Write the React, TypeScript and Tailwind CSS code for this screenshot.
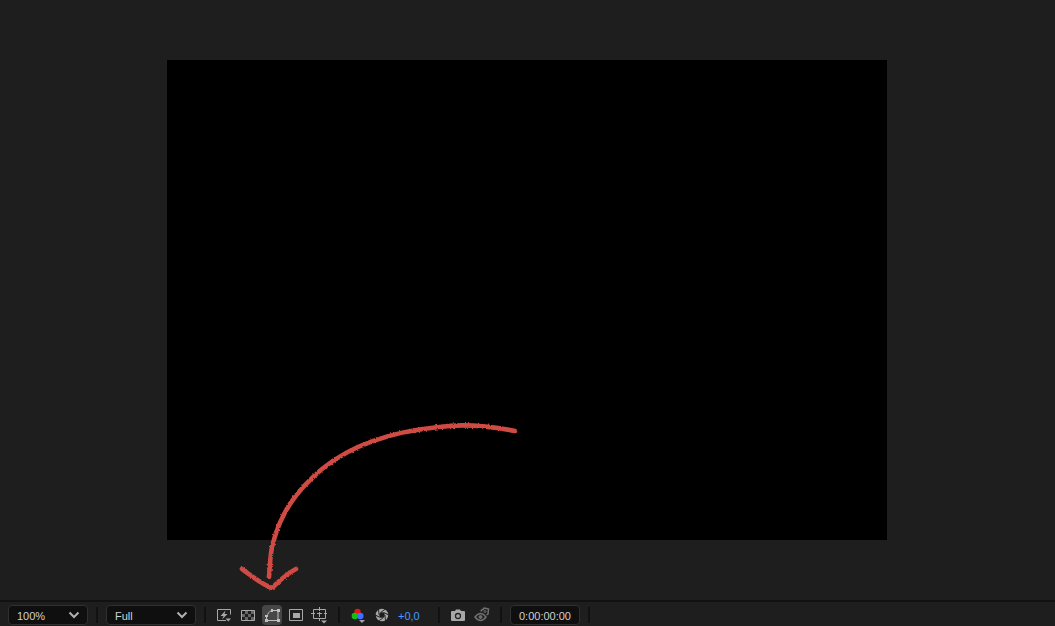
import type { ReactNode } from 'react';

const Divider = () => <div aria-hidden="true" className="mb-0.5 h-4 w-0.5 shrink-0 bg-[#111111]" />;

function ToolButton({ label, active = false, children }: { label: string; active?: boolean; children: ReactNode }) {
  return (
    <button
      type="button"
      aria-label={label}
      aria-pressed={active}
      className={`h-5 w-5 shrink-0 rounded-[4px] ${active ? 'bg-[#464646]' : 'hover:bg-[#2b2b2b]'}`}
    >
      <svg viewBox="0 0 20 20" className="block h-5 w-5" fill="none" stroke="#a8a8a8">
        {children}
      </svg>
    </button>
  );
}

function Picker({ label, options, width }: { label: string; options: string[]; width: string }) {
  return (
    <div className={`relative h-5 shrink-0 ${width}`}>
      <select
        aria-label={label}
        className="h-5 w-full appearance-none rounded-[4px] border border-[#303030] bg-[#0f0f0f] pt-0.5 pl-2 text-[11px] leading-4 text-[#d0d0d0]"
      >
        {options.map((o) => (
          <option key={o}>{o}</option>
        ))}
      </select>
      <svg viewBox="0 0 12 8" className="pointer-events-none absolute top-1.5 right-2 h-2 w-3" fill="none" stroke="#b0b0b0" strokeWidth="2">
        <path d="M1.500 1.500 6 6l4.500-4.500" />
      </svg>
    </div>
  );
}

const blades = [0, 60, 120, 180, 240, 300];

export default function App() {
  return (
    <div className="flex min-h-screen flex-col overflow-x-hidden bg-[#1e1e1e] font-['Liberation_Sans',sans-serif]">
      <main className="flex flex-1 items-start justify-center pt-15 pr-px pb-15">
        <div className="relative aspect-3/2 w-full max-w-[720px] bg-black">
          <svg viewBox="167 60 720 540" className="pointer-events-none absolute top-0 left-0 z-10 w-full" aria-hidden="true">
            <defs>
              <filter id="chalk" x="-5%" y="-5%" width="110%" height="110%">
                <feTurbulence type="fractalNoise" baseFrequency="0.5" numOctaves="2" seed="4" result="noise" />
                <feDisplacementMap in="SourceGraphic" in2="noise" scale="2.500" xChannelSelector="R" yChannelSelector="G" />
              </filter>
            </defs>
            <g filter="url(#chalk)" fill="none" stroke="#d14b45" strokeWidth="4.600" strokeLinecap="round" strokeLinejoin="round">
              <path d="M515 431C494 427 466 423 439 427C398 431 354 443 322 469C295 492 281 513 273 543C270 553 270 566 269 577" />
              <path d="M242 569C250 575 263 585 272 588C279 581 286 574 296 569" />
            </g>
          </svg>
        </div>
      </main>

      <footer className="flex h-[26px] shrink-0 items-end gap-2 border-t-2 border-[#111111] pb-px pl-2 text-[11px] leading-4">
        <Picker label="Magnification ratio" options={['100%', '50%', '25%']} width="w-20" />
        <Divider />
        <Picker label="Resolution" options={['Full', 'Half', 'Quarter']} width="w-[90px]" />
        <Divider />
        <div className="flex gap-1">
          <ToolButton label="Fast previews">
            <path d="M16.500 9.500V4.500H3.500v11H12" />
            <path d="m11.500 5.500-5 5.500h3L8 14.500l5.500-5.500h-3z" fill="#a8a8a8" stroke="none" />
            <path d="M11.500 13.500h5.500l-2.700 3z" fill="#a8a8a8" stroke="none" />
          </ToolButton>
          <ToolButton label="Toggle transparency grid">
            <path d="M3.500 5.500h13v10h-13z" />
            <path d="M7 6h3v3H7zm6 0h3v3h-3zM4 9h3v3H4zm6 0h3v3h-3zM7 12h3v3H7zm6 0h3v3h-3z" fill="#666666" stroke="none" />
          </ToolButton>
          <ToolButton label="Toggle mask and shape path visibility" active>
            <g stroke="#c0c0c0">
              <path d="M4.500 15.500v-4C6 9 7 6 10 5.500h6v10z" />
              <path d="M3 14h3v3H3zm0-4h3v2H3zm6-6h2v3H9zm6 0h3v3h-3zm0 10h3v3h-3z" fill="#c0c0c0" stroke="none" />
            </g>
          </ToolButton>
          <ToolButton label="Region of interest">
            <path d="M3.500 4.500h13v11h-13z" />
            <path d="M7 8h7v5H7z" fill="#a8a8a8" stroke="none" />
          </ToolButton>
          <ToolButton label="Choose grid and guide options">
            <path d="M3.500 4.500h12v9h-12zM9.500 2v4M9.500 7v5M9.500 13v3M1 8.500h4M7 8.500h5M14 8.500h3" />
            <path d="M11 15.500h6l-3 3z" fill="#a8a8a8" stroke="none" />
          </ToolButton>
        </div>
        <Divider />
        <div className="flex">
          <div className="flex gap-1">
            <ToolButton label="Show channel and color management">
              <g stroke="none">
                <circle cx="9.500" cy="7" r="3.200" fill="#ee1111" />
                <circle cx="6.800" cy="11" r="3.200" fill="#14bd18" />
                <circle cx="12.300" cy="11" r="3.200" fill="#426fff" />
                <path d="M11 15h6L14 18z" fill="#a8a8a8" />
              </g>
            </ToolButton>
            <ToolButton label="Reset exposure">
              <circle cx="10" cy="10" r="4.500" strokeWidth="3.600" />
              <g stroke="#1e1e1e" strokeWidth="0.900">
                {blades.map((angle) => (
                  <path key={angle} d="M8.500 7.500 13.500 4" transform={`rotate(${angle} 10 10)`} />
                ))}
              </g>
            </ToolButton>
          </div>
          <button type="button" aria-label="Adjust exposure" className="ml-1.5 h-5 w-8 pt-0.5 text-left text-[#459bff]">
            +0,0
          </button>
        </div>
        <Divider />
        <div className="flex gap-1">
          <ToolButton label="Take snapshot">
            <path d="M4 6h3l1-1.500h4l1 1.500h3q1 0 1 1v8q0 1-1 1H4q-1 0-1-1V7q0-1 1-1z" fill="#a8a8a8" stroke="none" />
            <circle cx="10" cy="11" r="2.500" stroke="#242424" strokeWidth="1.300" />
          </ToolButton>
          <ToolButton label="Show snapshot">
            <g stroke="#707070">
              <path d="M3 12q5.500-7 11 0-5.500 7-11 0z" strokeWidth="1.500" />
              <circle cx="8.500" cy="12" r="1.500" fill="#707070" strokeWidth="1" />
              <path d="m9 6.500.5-1.500 1.500-.5 1-1.500 2.500.5 2 .5-.5 5-1.500 1" strokeWidth="1.500" />
              <circle cx="13" cy="6.500" r="1" />
            </g>
          </ToolButton>
        </div>
        <Divider />
        <button type="button" aria-label="Preview time" className="h-5 w-[70px] shrink-0 rounded-[4px] border border-[#303030] bg-[#0f0f0f] pt-0.5 text-[#d0d0d0]">
          0:00:00:00
        </button>
        <Divider />
      </footer>
    </div>
  );
}
